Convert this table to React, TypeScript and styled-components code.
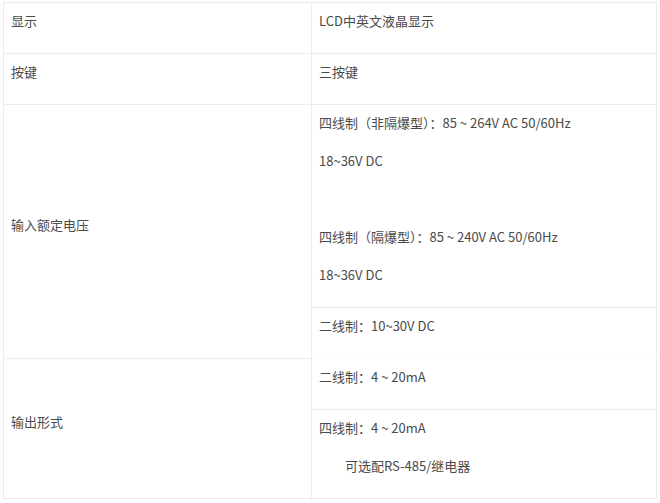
import styled, { createGlobalStyle } from "styled-components";

const GlobalStyle = createGlobalStyle`
  body {
    margin: 0;
    background: #fff;
    font-family: "Noto Sans CJK SC", "Noto Sans", sans-serif;
  }
`;

interface Row {
  label?: string;
  labelSpan?: number;
  lines: string[];
  noBottom?: boolean;
}

const rows: Row[] = [
  { label: "显示", lines: ["LCD中英文液晶显示"] },
  { label: "按键", lines: ["三按键"] },
  {
    label: "输入额定电压",
    labelSpan: 2,
    lines: [
      "四线制（非隔爆型）：85 ~ 264V AC 50/60Hz",
      "18~36V DC",
      "",
      "四线制（隔爆型）：85 ~ 240V AC 50/60Hz",
      "18~36V DC",
    ],
  },
  { lines: ["二线制：10~30V DC"], noBottom: true },
  { label: "输出形式", labelSpan: 2, lines: ["二线制：4 ~ 20mA"] },
  { lines: ["四线制：4 ~ 20mA", "\u3000\u3000可选配RS-485/继电器"] },
];

const App: React.FC = () => {
  return (
    <Page>
      <GlobalStyle />
      <Table>
        <colgroup>
          <col style={{ width: 308 }} />
          <col style={{ width: 345 }} />
        </colgroup>
        <tbody>
          {rows.map((row, i) => (
            <tr key={i}>
              {row.label && (
                <LabelCell rowSpan={row.labelSpan ?? 1}>
                  <Para>{row.label}</Para>
                </LabelCell>
              )}
              <ValueCell $noBottom={row.noBottom}>
                {row.lines.map((line, j) => (
                  <Para key={j}>{line || "\u00a0"}</Para>
                ))}
              </ValueCell>
            </tr>
          ))}
        </tbody>
      </Table>
    </Page>
  );
};

export default App;

const Page = styled.div`
  padding: 2px 0 0 3px;
`;

const Table = styled.table`
  width: 654px;
  table-layout: fixed;
  border-collapse: collapse;
  font-size: 13px;
  color: #4a4a4a;
`;

const LabelCell = styled.td`
  border: 1px solid #ececec;
  padding: 6px 7px;
  vertical-align: middle;
`;

const ValueCell = styled.td<{ $noBottom?: boolean }>`
  border: 1px solid #ececec;
  ${({ $noBottom }) => ($noBottom ? "border-bottom-color: #fafafa;" : "")}
  padding: 6px 7px;
  vertical-align: middle;
`;

const Para = styled.p`
  margin: 0 0 14px;
  line-height: 24px;
  white-space: pre;
`;
